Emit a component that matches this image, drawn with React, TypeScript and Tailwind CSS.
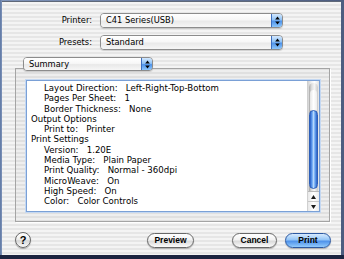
import React from "react";

const font = "font-['DejaVu_Sans',sans-serif]";

function Arrows() {
  return (
    <svg width="5" height="9" viewBox="0 0 5 9">
      <path d="M2.5 0.5 L4.8 3.6 L0.2 3.6 Z" fill="#000" />
      <path d="M2.5 8.5 L4.8 5.4 L0.2 5.4 Z" fill="#000" />
    </svg>
  );
}

function Popup({ text, w, h = 15 }: { text: string; w: string; h?: number }) {
  return (
    <div
      className={`${w} flex overflow-hidden rounded-[4px] border border-[#8c8c8c] shadow-[0_1px_1px_rgba(0,0,0,0.15)]`}
      style={{ height: h }}
    >
      <div className="flex flex-1 items-center bg-[linear-gradient(180deg,#ffffff_0%,#f7f7f7_45%,#e9e9e9_55%,#f6f6f6_100%)] pl-[5px] text-[8.3px] leading-none text-black">
        {text}
      </div>
      <div className="flex w-[11px] items-center justify-center border-l border-[#3d6fc0] bg-[linear-gradient(180deg,#d3e8fe_0%,#8fc2f6_45%,#4f93ea_55%,#8cc6fb_100%)]">
        <Arrows />
      </div>
    </div>
  );
}

function Btn({ label, w, primary }: { label: string; w: string; primary?: boolean }) {
  return (
    <div
      className={`${w} flex h-[15px] items-center justify-center rounded-full border font-['Liberation_Sans',sans-serif] text-[8.5px] font-bold leading-none text-black shadow-[0_1px_1px_rgba(0,0,0,0.25)] ${
        primary
          ? "border-[#2c59a2] bg-[linear-gradient(180deg,#d6eafe_0%,#93c5f7_45%,#4f92ea_55%,#92cbfc_100%)]"
          : "border-[#686868] bg-[linear-gradient(180deg,#ffffff_0%,#f2f2f2_45%,#dadada_55%,#fbfbfb_100%)]"
      }`}
    >
      {label}
    </div>
  );
}

const lines: { t: string; v?: string; indent: boolean }[] = [
  { t: "Layout Direction:", v: "Left-Right-Top-Bottom", indent: true },
  { t: "Pages Per Sheet:", v: "1", indent: true },
  { t: "Border Thickness:", v: "None", indent: true },
  { t: "Output Options", indent: false },
  { t: "Print to:", v: "Printer", indent: true },
  { t: "Print Settings", indent: false },
  { t: "Version:", v: "1.20E", indent: true },
  { t: "Media Type:", v: "Plain Paper", indent: true },
  { t: "Print Quality:", v: "Normal - 360dpi", indent: true },
  { t: "MicroWeave:", v: "On", indent: true },
  { t: "High Speed:", v: "On", indent: true },
  { t: "Color:", v: "Color Controls", indent: true },
];

export default function App() {
  return (
    <div className={`h-[259px] w-[344px] overflow-hidden bg-[#1c2440] ${font}`}>
      <div className="flex h-[255px] w-[344px] bg-[linear-gradient(90deg,#5d77a3_0px,#7f94ba_2px,#4d5d80_342px)]">
        <div className="mt-[1px] ml-[2px] h-[254px] w-[339px] border-t border-[#5f6878] bg-[repeating-linear-gradient(180deg,#f4f4f4_0px,#f4f4f4_2px,#e6e6e6_2px,#e6e6e6_4px)]">
          {/* Printer row */}
          <div className="mt-[11px] flex items-center">
            <div className="w-[90px] text-right text-[8.3px] leading-none text-black">Printer:</div>
            <div className="ml-[8px]">
              <Popup text="C41 Series(USB)" w="w-[183px]" />
            </div>
          </div>
          {/* Presets row */}
          <div className="mt-[7px] flex items-center">
            <div className="w-[90px] text-right text-[8.3px] leading-none text-black">Presets:</div>
            <div className="ml-[8px]">
              <Popup text="Standard" w="w-[183px]" />
            </div>
          </div>
          {/* Summary popup */}
          <div className="relative z-10 mt-[7px] ml-[21px] w-[130px]">
            <Popup text="Summary" w="w-[130px]" h={14} />
          </div>
          {/* Group box */}
          <div className="-mt-[3px] ml-[13px] h-[154px] w-[315px] border border-[#a4a4a4] bg-black/[0.025] shadow-[1px_1px_0_#ffffff]">
            <div className="mt-[11px] ml-[10px] flex h-[132px] w-[294px] border border-[#7aa0d6] bg-white shadow-[0_0_0_1px_#c4d8f2]">
              <div className="flex-1 pt-[2px] text-[8.6px] leading-[10.3px] text-black">
                {lines.map((l, i) => (
                  <div key={i} className={`whitespace-pre ${l.indent ? "pl-[17px]" : "pl-[4px]"}`}>
                    {l.v ? `${l.t}   ${l.v}` : l.t}
                  </div>
                ))}
              </div>
              {/* Scrollbar */}
              <div className="flex w-[12px] flex-col border-l border-[#d0d0d0] bg-[linear-gradient(90deg,#d4d4d4_0%,#f3f3f3_35%,#ffffff_60%,#e2e2e2_100%)]">
                <div className="mx-[1px] mt-[2px] flex flex-1 flex-col rounded-t-full bg-[linear-gradient(90deg,#a9a9a9_0%,#dedede_30%,#f6f6f6_60%,#c9c9c9_100%)]">
                  <div className="mx-[1px] mt-[7px] h-[20px] rounded-t-full bg-[linear-gradient(90deg,#e6e6e6_0%,#ffffff_50%,#eeeeee_100%)]" />
                  <div className="mt-[0px] mb-[1px] h-[79px] rounded-full border border-[#2d5fb8] bg-[linear-gradient(90deg,#2a5cc0_0%,#5e9cf0_28%,#b5d8fd_50%,#66a3f1_72%,#2d60c2_100%)]" />
                </div>
                <div className="flex h-[20px] flex-col border-t border-[#b8b8b8] bg-[linear-gradient(90deg,#e8e8e8_0%,#ffffff_50%,#ececec_100%)]">
                  <div className="flex flex-1 items-center justify-center">
                    <svg width="5" height="4" viewBox="0 0 5 4">
                      <path d="M2.5 0 L5 4 L0 4 Z" fill="#1a1a1a" />
                    </svg>
                  </div>
                  <div className="h-px bg-[#c8c8c8]" />
                  <div className="flex flex-1 items-center justify-center">
                    <svg width="5" height="4" viewBox="0 0 5 4">
                      <path d="M2.5 4 L5 0 L0 0 Z" fill="#1a1a1a" />
                    </svg>
                  </div>
                </div>
              </div>
            </div>
          </div>
          {/* Buttons */}
          <div className="mt-[10px] flex items-center pl-[13px]">
            <div className="flex h-[16px] w-[16px] items-center justify-center rounded-full border border-[#6a6a6a] bg-[linear-gradient(180deg,#ffffff_0%,#efefef_45%,#d6d6d6_55%,#fafafa_100%)] font-['Liberation_Sans',sans-serif] text-[11px] font-bold leading-none text-black shadow-[0_1px_1px_rgba(0,0,0,0.3)]">
              ?
            </div>
            <div className="ml-[116px]">
              <Btn label="Preview" w="w-[47px]" />
            </div>
            <div className="ml-[38px]">
              <Btn label="Cancel" w="w-[45px]" />
            </div>
            <div className="ml-[8px]">
              <Btn label="Print" w="w-[46px]" primary />
            </div>
          </div>
        </div>
      </div>
    </div>
  );
}
